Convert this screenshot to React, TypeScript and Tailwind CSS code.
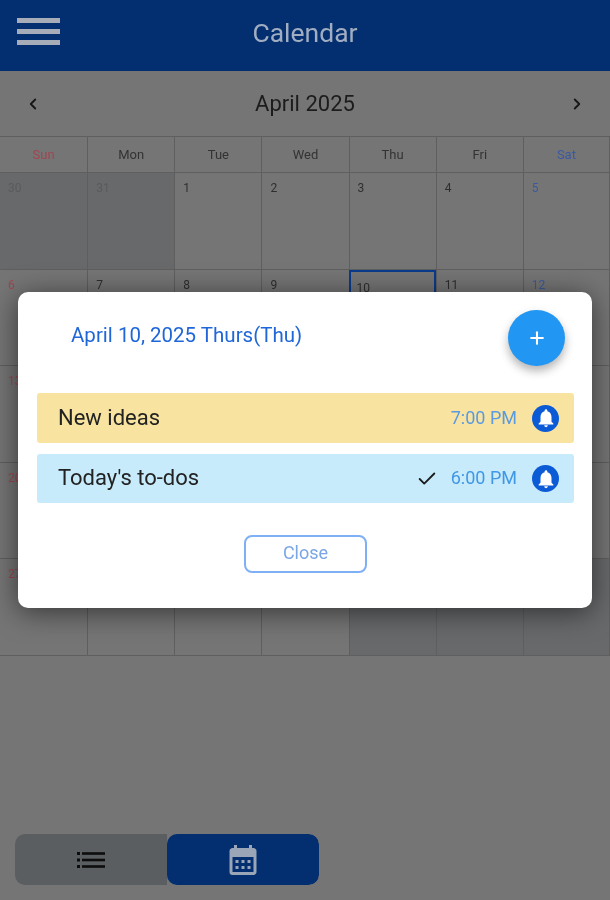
import { Check, ChevronLeft, ChevronRight, Plus } from 'lucide-react';
import { MdCalendarMonth, MdNotifications } from 'react-icons/md';

const weekDays = ['Sun', 'Mon', 'Tue', 'Wed', 'Thu', 'Fri', 'Sat'];

const weeks = [
  [30, 31, 1, 2, 3, 4, 5],
  [6, 7, 8, 9, 10, 11, 12],
  [13, 14, 15, 16, 17, 18, 19],
  [20, 21, 22, 23, 24, 25, 26],
  [27, 28, 29, 30, 1, 2, 3],
];

function dayColor(col: number) {
  if (col === 0) return 'text-[#a04650]';
  if (col === 6) return 'text-[#3a5aa0]';
  return 'text-[#2e2e2e]';
}

function Cell({ day, col, week }: { day: number; col: number; week: number }) {
  const outside = (week === 0 && day > 7) || (week === 4 && day < 7);
  const today = week === 1 && day === 10;
  // the dialog covers these numbers, only the Sunday column peeks out on the left
  const covered = week >= 2 && col > 0;
  return (
    <div
      className={`h-full ${outside ? 'bg-[#67696b]' : ''} ${
        today
          ? 'border-2 border-[#0a3a8c] pl-[6px] pt-[3px]'
          : 'border-l border-[#5f5f5f] pl-2 pt-[2px] first:border-l-0 last:border-r'
      }`}
    >
      {!covered && (
        <span className={`text-[12px] leading-4 ${outside ? 'text-[#595b5d]' : dayColor(col)}`}>{day}</span>
      )}
    </div>
  );
}

function EventRow({ title, time, done, bg, timeColor, height }: { title: string; time: string; done?: boolean; bg: string; timeColor: string; height: string }) {
  return (
    <div className={`flex items-center rounded-[3px] pl-[21px] pr-[15px] ${height} ${bg}`}>
      <span className="flex-1 pb-[2px] text-[22px] text-[#222222]">{title}</span>
      {done && <Check className="mr-[13px] h-[22px] w-[22px] text-[#1c1c1c]" strokeWidth={2} />}
      <span className={`pb-[2px] text-[18px] ${timeColor}`}>{time}</span>
      <span className="ml-[15px] flex h-[27px] w-[27px] items-center justify-center rounded-full bg-[#0b5ad6]">
        <MdNotifications className="h-[22px] w-[22px] text-white" />
      </span>
    </div>
  );
}

export default function App() {
  return (
    <div className="relative flex h-[900px] w-[610px] flex-col overflow-hidden bg-[#757575] font-['Roboto',sans-serif] blur-[0.5px]">
      <header className="relative flex h-[71px] items-center justify-center bg-[#032f70]">
        <div className="absolute left-[17px] top-[18px] flex w-[43px] flex-col gap-[6px]">
          <span className="h-[5px] bg-[#a7adb8]" />
          <span className="h-[5px] bg-[#a7adb8]" />
          <span className="h-[5px] bg-[#a7adb8]" />
        </div>
        <h1 className="pb-[6px] text-[26.5px] text-[#a1adc1]">Calendar</h1>
      </header>

      <div className="flex h-[65px] items-center justify-between px-6">
        <ChevronLeft className="h-[18px] w-[18px] text-[#161616]" strokeWidth={2.4} />
        <span className="text-[22px] text-[#1c1c1c]">April 2025</span>
        <ChevronRight className="h-[18px] w-[18px] text-[#161616]" strokeWidth={2.4} />
      </div>

      <div className="grid h-[37px] grid-cols-7 border-y border-[#5f5f5f]">
        {weekDays.map((d, i) => (
          <div
            key={d}
            className={`flex items-center justify-center border-l border-[#5f5f5f] text-[13px] first:border-l-0 last:border-r ${
              i === 0 ? 'text-[#a04650]' : i === 6 ? 'text-[#3a5aa0]' : 'text-[#333333]'
            }`}
          >
            {d}
          </div>
        ))}
      </div>

      <div className="grid h-[483px] grid-cols-7 grid-rows-5">
        {weeks.map((week, w) => (
          <div key={w} className="col-span-7 grid grid-cols-7 border-b border-[#5f5f5f]">
            {week.map((day, c) => (
              <Cell key={`${w}-${c}`} day={day} col={c} week={w} />
            ))}
          </div>
        ))}
      </div>

      <div className="mt-auto mb-[15px] ml-[15px] flex h-[51px] w-[304px] overflow-hidden rounded-[10px]">
        <div className="flex flex-1 items-center justify-center bg-[#5b5e60]">
          <svg width="28" height="16" viewBox="0 0 28 16" fill="#0d0d0d">
            <rect x="0" y="0" width="3" height="3" />
            <rect x="0" y="6.5" width="3" height="3" />
            <rect x="0" y="13" width="3" height="3" />
            <rect x="5" y="0.2" width="23" height="2.6" />
            <rect x="5" y="6.7" width="23" height="2.6" />
            <rect x="5" y="13.2" width="23" height="2.6" />
          </svg>
        </div>
        <div className="flex flex-1 items-center justify-center rounded-[10px] bg-[#032f70]">
          <MdCalendarMonth className="h-[36px] w-[36px] text-[#9aa5b8]" />
        </div>
      </div>

      <div className="absolute left-[18px] top-[292px] flex h-[316px] w-[574px] flex-col rounded-[10px] bg-white pl-[19px] pr-[18px] shadow-[0_4px_28px_rgba(0,0,0,0.55)]">
        <div className="flex h-[101px] items-start justify-between">
          <span className="ml-[34px] mt-[29px] text-[20.5px] leading-7 text-[#1f66d8]">April 10, 2025 Thurs(Thu)</span>
          <button className="mr-[9px] mt-[18px] flex h-[56px] w-[57px] items-center justify-center rounded-full bg-[#2196f3] shadow-[0_5px_10px_rgba(0,0,0,0.3)]">
            <Plus className="h-[20px] w-[20px] text-white" strokeWidth={2.5} />
          </button>
        </div>
        <div className="flex flex-col gap-[11px]">
          <EventRow title="New ideas" time="7:00 PM" height="h-[50px]" bg="bg-[#f8e4a0]" timeColor="text-[#5b9adf]" />
          <EventRow title="Today's to-dos" time="6:00 PM" done height="h-[49px]" bg="bg-[#c7ebfb]" timeColor="text-[#3f97e6]" />
        </div>
        <button className="mx-auto mt-[32px] h-[38px] w-[123px] rounded-[8px] border-2 border-[#7fb0f5] pb-[3px] text-[18px] text-[#7ba6e6]">
          Close
        </button>
      </div>
    </div>
  );
}
